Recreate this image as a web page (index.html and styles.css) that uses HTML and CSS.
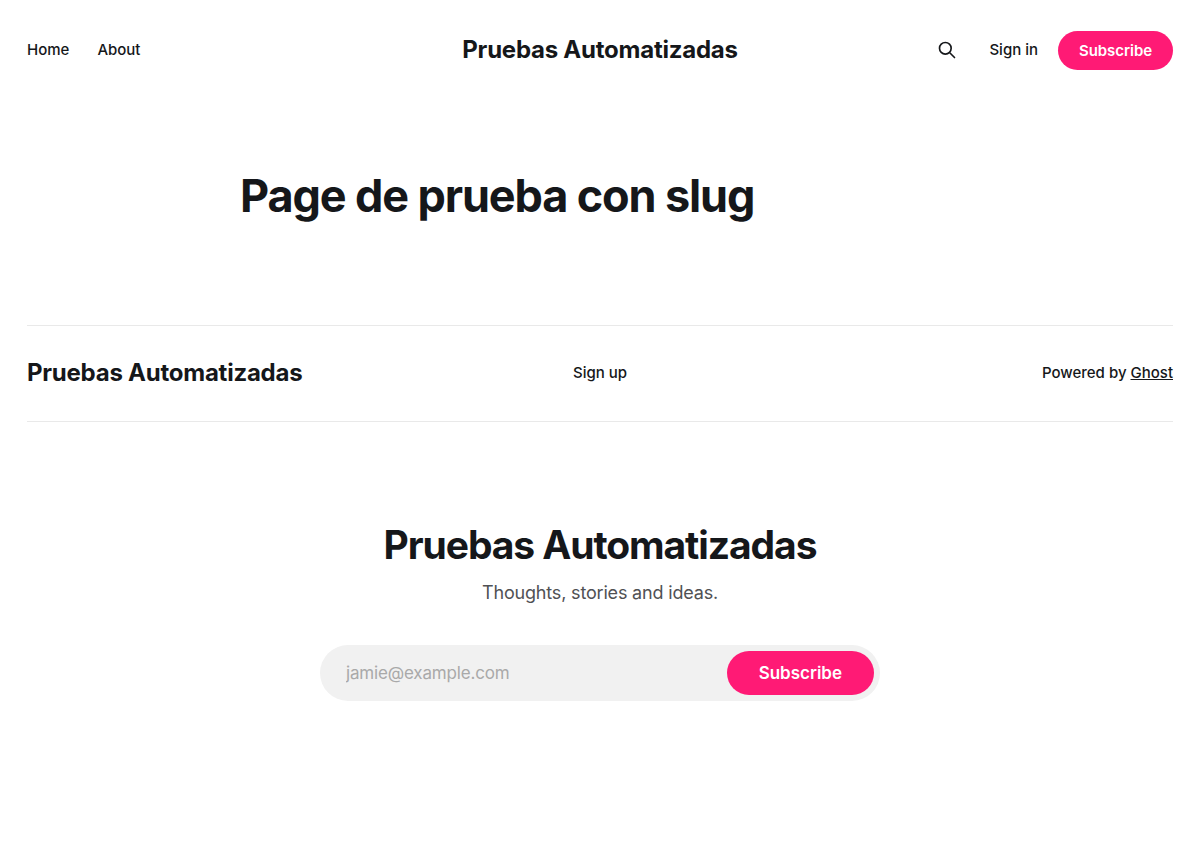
FILE: index.html
```html
<!DOCTYPE html>
<html lang="en">
<head>
<meta charset="utf-8">
<meta name="viewport" content="width=device-width, initial-scale=1">
<title>Page de prueba con slug</title>
<link rel="stylesheet" href="styles.css">
</head>
<body>
<header class="site-header">
  <nav class="nav">
    <a href="#">Home</a>
    <a href="#">About</a>
  </nav>
  <a class="site-name" href="#">Pruebas Automatizadas</a>
  <div class="actions">
    <button class="search" type="button" aria-label="Search">
      <svg width="20" height="20" viewBox="0 0 24 24" fill="none" stroke="currentColor" stroke-width="2" stroke-linecap="round" stroke-linejoin="round" aria-hidden="true"><path d="M21 21l-6-6m2-5a7 7 0 11-14 0 7 7 0 0114 0z"/></svg>
    </button>
    <a href="#">Sign in</a>
    <a class="subscribe" href="#">Subscribe</a>
  </div>
</header>
<main class="content">
  <h1 class="title">Page de prueba con slug</h1>
</main>
<footer class="site-footer">
  <div class="footer-bar">
    <a class="site-name" href="#">Pruebas Automatizadas</a>
    <a href="#">Sign up</a>
    <div class="powered">Powered by <a href="#">Ghost</a></div>
  </div>
  <section class="signup">
    <h2 class="signup-title">Pruebas Automatizadas</h2>
    <p class="signup-text">Thoughts, stories and ideas.</p>
    <form class="signup-form">
      <input class="email" type="email" placeholder="jamie@example.com" aria-label="Email address">
      <button class="submit" type="button">Subscribe</button>
    </form>
  </section>
</footer>
</body>
</html>
```

FILE: styles.css
```css
* { box-sizing: border-box; }

body {
  margin: 0;
  background: #fff;
  color: #15171a;
  font-family: Inter, "Liberation Sans", sans-serif;
  font-size: 15px;
  font-weight: 550;
  line-height: 24px;
}

a {
  color: inherit;
  text-decoration: none;
}

button, input {
  border: 0;
  font-family: inherit;
}

.site-header {
  display: grid;
  grid-template-columns: 1fr auto 1fr;
  align-items: center;
  min-height: 100px;
  padding: 0 27px;
}

.nav {
  display: flex;
  gap: 28px;
}

.site-name {
  font-size: 24px;
  font-weight: 700;
  letter-spacing: -0.01em;
  white-space: nowrap;
}

.actions {
  display: flex;
  align-items: center;
  justify-content: flex-end;
  gap: 20px;
}

.search {
  display: flex;
  align-items: center;
  justify-content: center;
  width: 32px;
  height: 32px;
  margin-right: 6px;
  padding: 0;
  background: none;
  color: inherit;
  cursor: pointer;
}

.subscribe {
  padding: 8px 21px 7px;
  border-radius: 20px;
  background: #ff1a75;
  color: #fff;
  font-weight: 600;
  letter-spacing: -0.004em;
}

.content {
  max-width: 720px;
  margin: 0 auto;
  padding: 70px 0 103px;
}

.title {
  margin: 0;
  font-size: 45px;
  font-weight: 700;
  line-height: 52px;
  letter-spacing: -0.025em;
}

.site-footer {
  margin: 0 27px;
}

.footer-bar {
  display: grid;
  grid-template-columns: 1fr auto 1fr;
  align-items: center;
  min-height: 97px;
  padding-bottom: 2px;
  border-top: 1px solid #e9e9e9;
  border-bottom: 1px solid #e9e9e9;
}

.powered {
  text-align: right;
}

.powered a {
  text-decoration: underline;
}

.signup {
  max-width: 560px;
  margin: 0 auto;
  padding: 100px 0 160px;
  text-align: center;
}

.signup-title {
  margin: 0;
  font-size: 39px;
  font-weight: 700;
  line-height: 46px;
  letter-spacing: -0.028em;
}

.signup-text {
  margin: 12px 0 39px;
  color: #505154;
  font-size: 18px;
  font-weight: 400;
  line-height: 26px;
  letter-spacing: -0.01em;
}

.signup-form {
  display: flex;
  align-items: center;
  height: 56px;
  padding: 0 6px 0 26px;
  border-radius: 28px;
  background: #f1f1f1;
}

.email {
  flex: 1;
  min-width: 0;
  padding: 0;
  outline: 0;
  background: none;
  color: inherit;
  font-size: 17px;
  letter-spacing: -0.01em;
}

.email::placeholder {
  color: #a9a9a9;
}

.submit {
  height: 44px;
  padding: 0 32px;
  border-radius: 22px;
  background: #ff1a75;
  color: #fff;
  font-size: 17px;
  font-weight: 600;
  cursor: pointer;
}
```
